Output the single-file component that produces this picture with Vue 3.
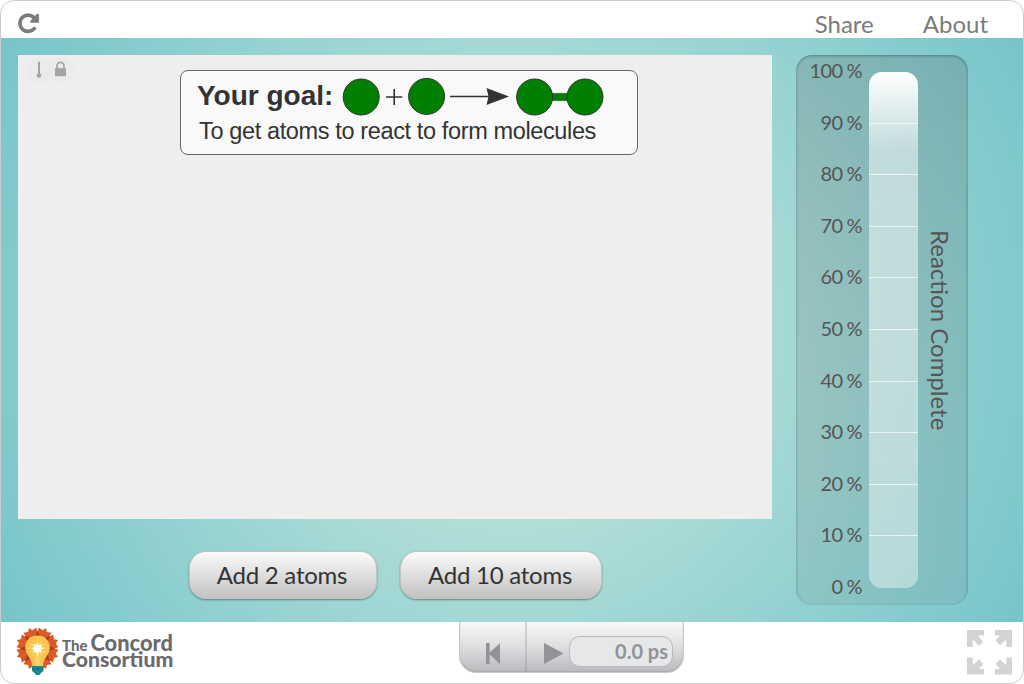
<script setup>
const ticks = [100, 90, 80, 70, 60, 50, 40, 30, 20, 10, 0]
const petals = [0, 45, 90, 135, 180, 225, 270, 315]
const rays = [0, 30, 60, 90, 120, 150, 180, 210, 240, 270, 300, 330]
</script>

<template>
  <div class="frame">
    <header class="top">
      <svg class="reload" width="22" height="22" viewBox="0 0 22 22">
        <path d="M16.3 16.6A8.2 8.2 0 1 1 16 5.6" fill="none" stroke="#7b7b7b" stroke-width="3.7" stroke-linecap="round" />
        <path d="M20.7 2.2V10.4H12.6V9L18.8 2.2Z" fill="#7b7b7b" stroke="#7b7b7b" stroke-width=".6" stroke-linejoin="round" />
      </svg>
      <nav><a>Share</a><a>About</a></nav>
    </header>

    <main>
      <section class="left">
        <div class="canvas">
          <div class="marks">
            <span class="mark">
              <svg width="26" height="26" viewBox="0 0 26 26"><path d="M13 5.5V18" stroke="#a4a4a4" stroke-width="2" stroke-linecap="round" /><circle cx="13" cy="18.5" r="2.3" fill="#a4a4a4" /></svg>
            </span>
            <span class="mark">
              <svg width="26" height="26" viewBox="0 0 26 26"><path d="M9 12V9.2a3.5 3.9 0 0 1 7 0V12" fill="none" stroke="#a4a4a4" stroke-width="1.7" /><rect x="7" y="11.2" width="11" height="8" fill="#a4a4a4" /></svg>
            </span>
          </div>
          <div class="goal">
            <div class="goal-row">
              <strong>Your goal:</strong>
              <svg width="264" height="40" viewBox="341 77 264 40">
                <rect x="550" y="93.3" width="18" height="7.4" fill="green" stroke="#3d6b3d" stroke-width=".8" />
                <g fill="green" stroke="#333" stroke-width="1">
                  <circle cx="361.2" cy="97" r="18" /><circle cx="426.6" cy="96.4" r="18" />
                  <circle cx="534.6" cy="97" r="18" /><circle cx="585" cy="97" r="18" />
                </g>
                <path d="M386 97H402.3M394.2 89V105" stroke="#333" stroke-width="1.6" />
                <path d="M450 96.6H490" stroke="#333" stroke-width="1.5" />
                <path d="M486.5 88L509 96.6L486.5 105L488.5 96.6Z" fill="#333" />
              </svg>
            </div>
            <p>To get atoms to react to form molecules</p>
          </div>
        </div>
        <div class="buttons">
          <button class="b2">Add 2 atoms</button>
          <button class="b10">Add 10 atoms</button>
        </div>
      </section>

      <aside class="gauge">
        <div class="labels"><span v-for="t in ticks" :key="t">{{ t }} %</span></div>
        <div class="bar">
          <i v-for="n in 10" :key="n"></i>
        </div>
        <div class="title">Reaction Complete</div>
      </aside>
    </main>

    <footer>
      <div class="brand">
        <svg width="46" height="50" viewBox="14 625 46 50">
          <g v-for="a in petals" :key="a" :transform="`rotate(${a + 22.5} 37.5 648.5)`">
            <path d="M31 646L31.2 633.5L30.6 628.6L35.2 629.6L37.5 626.2L39.8 629.6L44.4 628.6L43.8 633.5L44 646Z" fill="#db5a2a" />
          </g>
          <g v-for="a in petals" :key="'s' + a" :transform="`rotate(${a} 37.5 648.5)`">
            <path d="M32.5 643L37.5 630.5L42.5 643Z" fill="#a93d1e" />
          </g>
          <path d="M25.2 647.5C25.2 640 30.6 635.5 37.5 635.5S49.8 640 49.8 647.5C49.8 655 43.5 657 43 666H32.2C31.5 657 25.2 655 25.2 647.5Z" fill="#f9c34c" />
          <path d="M34.5 665.5L36 652H39L40.5 665.5Z" fill="#fbd473" />
          <g stroke="#fbd77d" stroke-width="1">
            <path v-for="r in rays" :key="r" d="M37.5 648V639" :transform="`rotate(${r} 37.5 648)`" />
          </g>
          <path d="M37.5 642L38.8 645.2L42 643.7L40.6 647L44 648.3L40.6 649.7L42 653L38.8 651.5L37.5 655L36.2 651.5L33 653L34.4 649.7L31 648.3L34.4 647L33 643.7L36.2 645.2Z" fill="#fff" />
          <path d="M32 666H43.5V671L41 673L39.5 675H36L34.5 673L32 671Z" fill="#1b8993" />
          <path d="M32 669H43.5" stroke="#126875" stroke-width="1" />
        </svg>
        <div class="name"><div class="line1"><small>The</small><span>Concord</span></div><div class="line2">Consortium</div></div>
      </div>
      <div class="player">
        <div class="rewind">
          <svg width="14" height="22" viewBox="0 0 14 22"><path d="M0 0H3.6V9.6L14 0.2V21L3.6 11.5V21H0Z" fill="#929397" /></svg>
        </div>
        <div class="play">
          <svg width="20" height="22" viewBox="0 0 20 22"><path d="M0 0L19.5 10.5L0 21Z" fill="#929397" /></svg>
          <div class="time">0.0 ps</div>
        </div>
      </div>
      <svg class="full" width="45" height="45" viewBox="0 0 45 45" fill="#d1d3d4">
        <path d="M0 0H17V5.5H10.7L16 11.8L12 15.7L5.7 9.3V17H0Z" />
        <path transform="translate(45 0) scale(-1 1)" d="M0 0H17V5.5H12L16.4 10.5L12 15.2L5.7 9.3V17H0Z" />
        <path transform="translate(0 44.5) scale(1 -1)" d="M0 0H17V5.5H12L16.4 10.5L12 15.2L5.7 9.3V17H0Z" />
        <path transform="translate(45 44.5) scale(-1 -1)" d="M0 0H17V5.5H12L16.4 10.5L12 15.2L5.7 9.3V17H0Z" />
      </svg>
    </footer>
  </div>
</template>

<style>
body { background: #fff; overflow: hidden; }
</style>

<style scoped>
* { box-sizing: border-box; }
.frame { width: 1024px; height: 684px; border: 1px solid #ccc; border-radius: 14px; overflow: hidden; background: #fff; display: flex; flex-direction: column; font-family: Lato, sans-serif; }
.top { height: 37px; display: flex; justify-content: space-between; padding: 0 35px 0 17px; flex: none; }
.reload { margin-top: 11px; }
nav { display: flex; gap: 49px; font-size: 24px; line-height: 29px; color: #7b7b7b; padding-top: 8px; }
main { height: 584px; flex: none; display: flex; padding: 17px 0 0 17px; gap: 24px; background: radial-gradient(circle farthest-corner at center, #b9e2db 0%, #b3dfd9 30%, #76c5c9 100%); }
.left { width: 754px; flex: none; }
.canvas { height: 464px; background: #eee; display: flex; flex-direction: column; position: relative; padding: 15px 0 0 162px; }
.marks { position: absolute; left: 8px; top: 2px; display: flex; }
.mark { width: 26px; height: 26px; border-radius: 50%; background: #eaeceb; margin-right: -4px; }
.goal { width: 458px; height: 85px; border: 1px solid #666; border-radius: 8px; background: #f9f9f9; color: #333; font-family: "Liberation Sans", Arial, sans-serif; padding: 6px 0 0 16px; }
.goal-row { display: flex; height: 40px; align-items: center; }
.goal-row strong { font-size: 28px; line-height: 32px; width: 144px; white-space: nowrap; padding-bottom: 3px; }
.goal p { margin: 0 0 0 2px; font-size: 23.5px; line-height: 28px; letter-spacing: -.37px; white-space: nowrap; }
.buttons { display: flex; gap: 23px; padding: 32px 0 0 171px; }
button { height: 48px; padding: 0 2px 2px 0; border: 1px solid #c4c4c4; border-radius: 17px; background: linear-gradient(#fbfbfb, #e1e1e1 45%, #c2c2c2); color: #333; font: 24px Lato, sans-serif; letter-spacing: -.25px; box-shadow: 0 1px 2px rgba(0, 0, 0, .4); }
.b2 { width: 188px; }
.b10 { width: 202px; }
.gauge { width: 172px; flex: none; height: 550px; border-radius: 16px; background: linear-gradient(rgba(90, 90, 90, .22), rgba(100, 100, 100, .17) 60%, rgba(100, 100, 100, .11)); box-shadow: inset 0 1px 3px rgba(0, 50, 50, .4); display: grid; grid-template-columns: 66px 49px 30px; column-gap: 7px; padding-top: 5px; }
.labels { display: flex; flex-direction: column; text-align: right; font-size: 20px; letter-spacing: -.6px; word-spacing: -.5px; color: #555; margin-top: -2px; }
.labels span { height: 51.6px; line-height: 24px; white-space: nowrap; flex: none; }
.bar { height: 516px; margin-top: 12px; border-radius: 13px; overflow: hidden; display: flex; flex-direction: column; background: linear-gradient(#fff, rgba(255, 255, 255, .5) 78px, rgba(255, 255, 255, .47) 50%, rgba(255, 255, 255, .4)); box-shadow: inset 0 0 1px rgba(255, 255, 255, .5); }
.bar i { height: 51.6px; flex: none; border-bottom: 1.5px solid rgba(255, 255, 255, .65); }
.bar i:last-child { border: 0; }
.title { writing-mode: vertical-rl; font-size: 24px; line-height: 30px; color: #555; height: 540px; margin-left: -3px; text-align: center; white-space: nowrap; }
footer { flex: 1; display: flex; align-items: flex-start; }
.brand { width: 458px; display: flex; padding: 3px 0 0 13px; }
.name { margin: 10px 0 0 2px; color: #6b6b6d; font-family: Lato, sans-serif; font-weight: 900; }
.line1 { display: flex; align-items: baseline; gap: 3px; font-size: 21.8px; height: 16px; line-height: 16px; }
.line1 small { font-size: 15px; line-height: 16px; }
.line2 { font-size: 21.2px; line-height: 16px; height: 17px; }
.player { width: 225px; height: 51px; display: flex; border: 1px solid #c8c9cb; border-top: 0; border-radius: 0 0 17px 17px; background: linear-gradient(#f8f8f8, #dddedf 50%, #b9babd); box-shadow: inset 0 -1px 1px #aaa; }
.rewind { width: 67px; border-right: 2px solid rgba(150, 150, 155, .35); padding: 21px 0 0 26px; }
.play { display: flex; padding: 14px 0 0 17px; }
.play > svg { margin-top: 7px; }
.time { width: 104px; height: 31px; margin-left: 5px; border: 1px solid #b9babc; border-radius: 11px; background: #e6e7e8; color: #929397; font-size: 20px; font-weight: 700; line-height: 28px; text-align: right; padding-right: 4px; }
.full { margin: 8px 11px 0 auto; }
</style>
